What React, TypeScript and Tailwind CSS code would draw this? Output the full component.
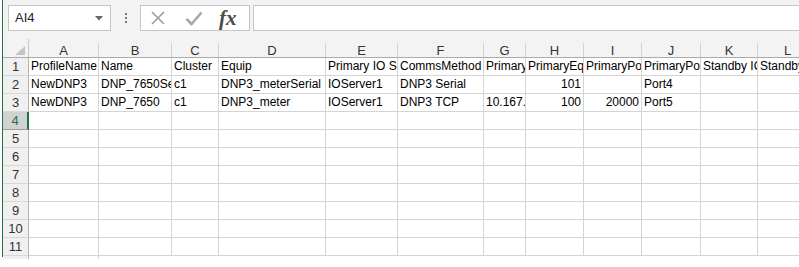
import React from 'react';

const cols = [
  { key: 'A', w: 70 },
  { key: 'B', w: 73 },
  { key: 'C', w: 47 },
  { key: 'D', w: 107 },
  { key: 'E', w: 72 },
  { key: 'F', w: 86 },
  { key: 'G', w: 42 },
  { key: 'H', w: 58 },
  { key: 'I', w: 58 },
  { key: 'J', w: 59 },
  { key: 'K', w: 57 },
  { key: 'L', w: 60 },
];

type Cell = string | { v: string; right: true };
const n = (v: string): Cell => ({ v, right: true });

const rows: Cell[][] = [
  ['ProfileName', 'Name', 'Cluster', 'Equip', 'Primary IO Server', 'CommsMethod', 'PrimaryIPAddress', 'PrimaryEquipAddress', 'PrimaryPort', 'PrimaryPortName', 'Standby IO Server', 'Standby'],
  ['NewDNP3', 'DNP_7650Serial', 'c1', 'DNP3_meterSerial', 'IOServer1', 'DNP3 Serial', '', n('101'), '', 'Port4', '', ''],
  ['NewDNP3', 'DNP_7650', 'c1', 'DNP3_meter', 'IOServer1', 'DNP3 TCP', '10.167.10.10', n('100'), n('20000'), 'Port5', '', ''],
];

const TOTAL_ROWS = 11;
const cellFont = { fontFamily: '"Liberation Sans", Arial, sans-serif' };

const FormulaBar = () => (
  <div className="h-[39px] bg-[#f3f3f3] flex items-start pt-[5px]">
    <div className="ml-[5px] w-[103px] h-[26px] bg-white border border-[#c6c6c6] flex items-center pl-[6px] pr-[7px]">
      <span className="text-[13px] text-[#222] flex-1" style={cellFont}>AI4</span>
      <svg width="8" height="5" viewBox="0 0 8 5"><path d="M0 0 L8 0 L4 4.5 Z" fill="#666" /></svg>
    </div>
    <div className="w-[29px] h-[26px] flex flex-col items-center justify-center gap-[2px]">
      <div className="w-[2px] h-[2px] bg-[#777]" />
      <div className="w-[2px] h-[2px] bg-[#777]" />
      <div className="w-[2px] h-[2px] bg-[#777]" />
    </div>
    <div className="w-[110px] h-[26px] bg-white border border-[#c6c6c6] flex items-center">
      <svg className="ml-[9px]" width="16" height="16" viewBox="0 0 16 16">
        <path d="M2 2 L14 14 M14 2 L2 14" stroke="#9c9c9c" strokeWidth="1.6" fill="none" />
      </svg>
      <svg className="ml-[19px]" width="18" height="16" viewBox="0 0 18 16">
        <path d="M1.5 9 L6.5 14 L16.5 2.5" stroke="#a8a8a8" strokeWidth="2.6" fill="none" />
      </svg>
      <span className="ml-[16px] text-[#4a4a4a] text-[21px] italic font-bold leading-none" style={{ fontFamily: '"Liberation Serif", "Times New Roman", serif' }}>
        fx
      </span>
    </div>
    <div className="ml-[3px] flex-1 h-[26px] bg-white border border-[#c6c6c6] border-r-0" />
  </div>
);

const HeaderRow = () => (
  <div className="flex h-[19px] bg-[#f3f3f3] border-b border-[#ababab]">
    <div className="w-[26px] shrink-0 flex items-end justify-end pr-[3px] pb-[2px] border-r border-[#c8c8c8]">
      <svg width="10" height="9" viewBox="0 0 10 9"><path d="M10 0 L10 9 L0 9 Z" fill="#c4c4c4" /></svg>
    </div>
    {cols.map((c) => (
      <div key={c.key} className="shrink-0 flex pt-[4px]" style={{ width: c.w }}>
        <div className="flex-1 border-r border-[#d3d3d3] text-center text-[13px] leading-[15px] text-[#333]" style={cellFont}>
          {c.key}
        </div>
      </div>
    ))}
  </div>
);

const DataRow = ({ i, cells }: { i: number; cells: Cell[] }) => {
  const active = i === 4;
  return (
    <div className="flex h-[18px]">
      <div
        className={`w-[26px] shrink-0 border-b text-center text-[13px] leading-[17px] ${
          active ? 'bg-[#d2d2d2] text-[#217346] border-r-2 border-r-[#217346] border-b-[#9b9b9b]' : 'bg-[#f0f0f0] text-[#333] border-r border-r-[#b4b4b4] border-b-[#d8d8d8]'
        }`}
        style={cellFont}
      >
        {i}
      </div>
      {cols.map((c, k) => {
        const cell = cells[k];
        const v = typeof cell === 'string' ? cell : cell?.v ?? '';
        const right = typeof cell === 'object' && cell !== null;
        return (
          <div
            key={c.key}
            className={`shrink-0 border-r border-b border-[#d4d4d4] overflow-hidden whitespace-nowrap text-[12px] leading-[17px] text-black px-[2px] ${right ? 'text-right' : 'text-left'}`}
            style={{ width: c.w, ...cellFont }}
          >
            {v}
          </div>
        );
      })}
    </div>
  );
};

export default function App() {
  return (
    <div className="w-[799px] h-[267px] bg-white flex overflow-hidden">
      <div className="w-[2px] shrink-0 bg-white" />
      <div className="w-[1px] h-[257px] shrink-0 bg-[#217346]" />
      <div className="flex-1 flex flex-col min-w-0">
        <FormulaBar />
        <HeaderRow />
        {Array.from({ length: TOTAL_ROWS }).map((_, idx) => (
          <DataRow key={idx} i={idx + 1} cells={rows[idx] ?? []} />
        ))}
        <div className="flex h-[3px]">
          <div className="w-[26px] shrink-0 bg-[#f0f0f0] border-r border-[#b4b4b4]" />
          <div className="w-[70px] shrink-0 border-r border-[#d4d4d4]" />
        </div>
      </div>
    </div>
  );
}
